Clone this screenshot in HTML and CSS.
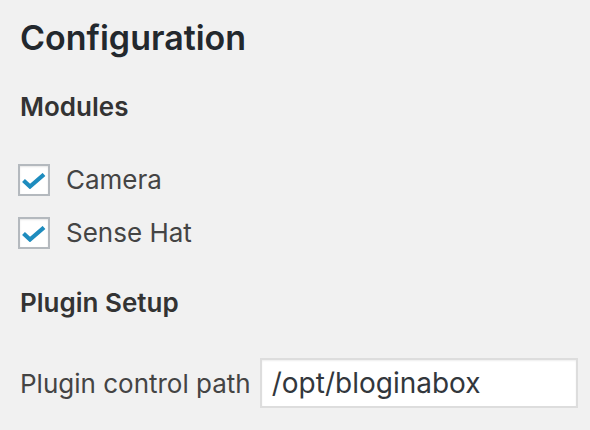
FILE: index.html
```html
<!DOCTYPE html>
<html>
<head>
<meta charset="utf-8">
<link rel="stylesheet" href="styles.css">
</head>
<body>
<div class="wrap">
  <h1 class="title">Configuration</h1>
  <h2 class="section section-first">Modules</h2>
  <div class="checks">
    <label class="check"><span class="box"><svg class="tick" viewBox="0 0 24 16" width="24" height="16"><path d="M1.5 7.5L8 13.5L22 1.5" fill="none" stroke="#1e8cbe" stroke-width="4.2"/></svg></span>Camera</label>
    <label class="check"><span class="box"><svg class="tick" viewBox="0 0 24 16" width="24" height="16"><path d="M1.5 7.5L8 13.5L22 1.5" fill="none" stroke="#1e8cbe" stroke-width="4.2"/></svg></span>Sense Hat</label>
  </div>
  <h2 class="section section-next">Plugin Setup</h2>
  <div class="field">
    <span class="field-label">Plugin control path</span>
    <span class="input">/opt/bloginabox</span>
  </div>
</div>
</body>
</html>
```
FILE: styles.css
```css
html, body {
  margin: 0;
  padding: 0;
  background: #f1f1f1;
  overflow: hidden;
}
body {
  font-family: Inter, "Noto Sans", sans-serif;
  color: #444;
}
.wrap {
  padding: 16px 0 0 20px;
}
.title {
  margin: 0;
  font-size: 34px;
  font-weight: 600;
  line-height: 44px;
  color: #23282d;
}
.section {
  font-size: 26px;
  font-weight: 600;
  line-height: 32px;
  color: #333;
}
.section-first {
  margin: 31px 0 0;
}
.section-next {
  margin: 38px 0 0;
}
.checks {
  margin-top: 41px;
  display: flex;
  flex-direction: column;
  gap: 21px;
}
.check {
  display: flex;
  align-items: center;
  font-size: 26px;
  line-height: 32px;
  margin-left: -2px;
  white-space: nowrap;
}
.box {
  box-sizing: border-box;
  width: 32px;
  height: 32px;
  border: 2px solid #b4b9be;
  background: #fff;
  margin-right: 16px;
  display: flex;
  align-items: center;
  justify-content: center;
  box-shadow: inset 0 1px 2px rgba(0,0,0,.1);
}
.tick {
  margin-top: 1px;
}
.field {
  margin-top: 39px;
  display: flex;
  align-items: center;
  white-space: nowrap;
  font-size: 26px;
}
.field-label {
  margin-right: 9px;
}
.input {
  box-sizing: border-box;
  width: 318px;
  height: 50px;
  flex: none;
  border: 2px solid #ddd;
  background: #fff;
  box-shadow: inset 0 1px 2px rgba(0,0,0,.07);
  padding: 0 10px;
  display: flex;
  align-items: center;
  font-size: 28px;
  color: #32373c;
}
```
